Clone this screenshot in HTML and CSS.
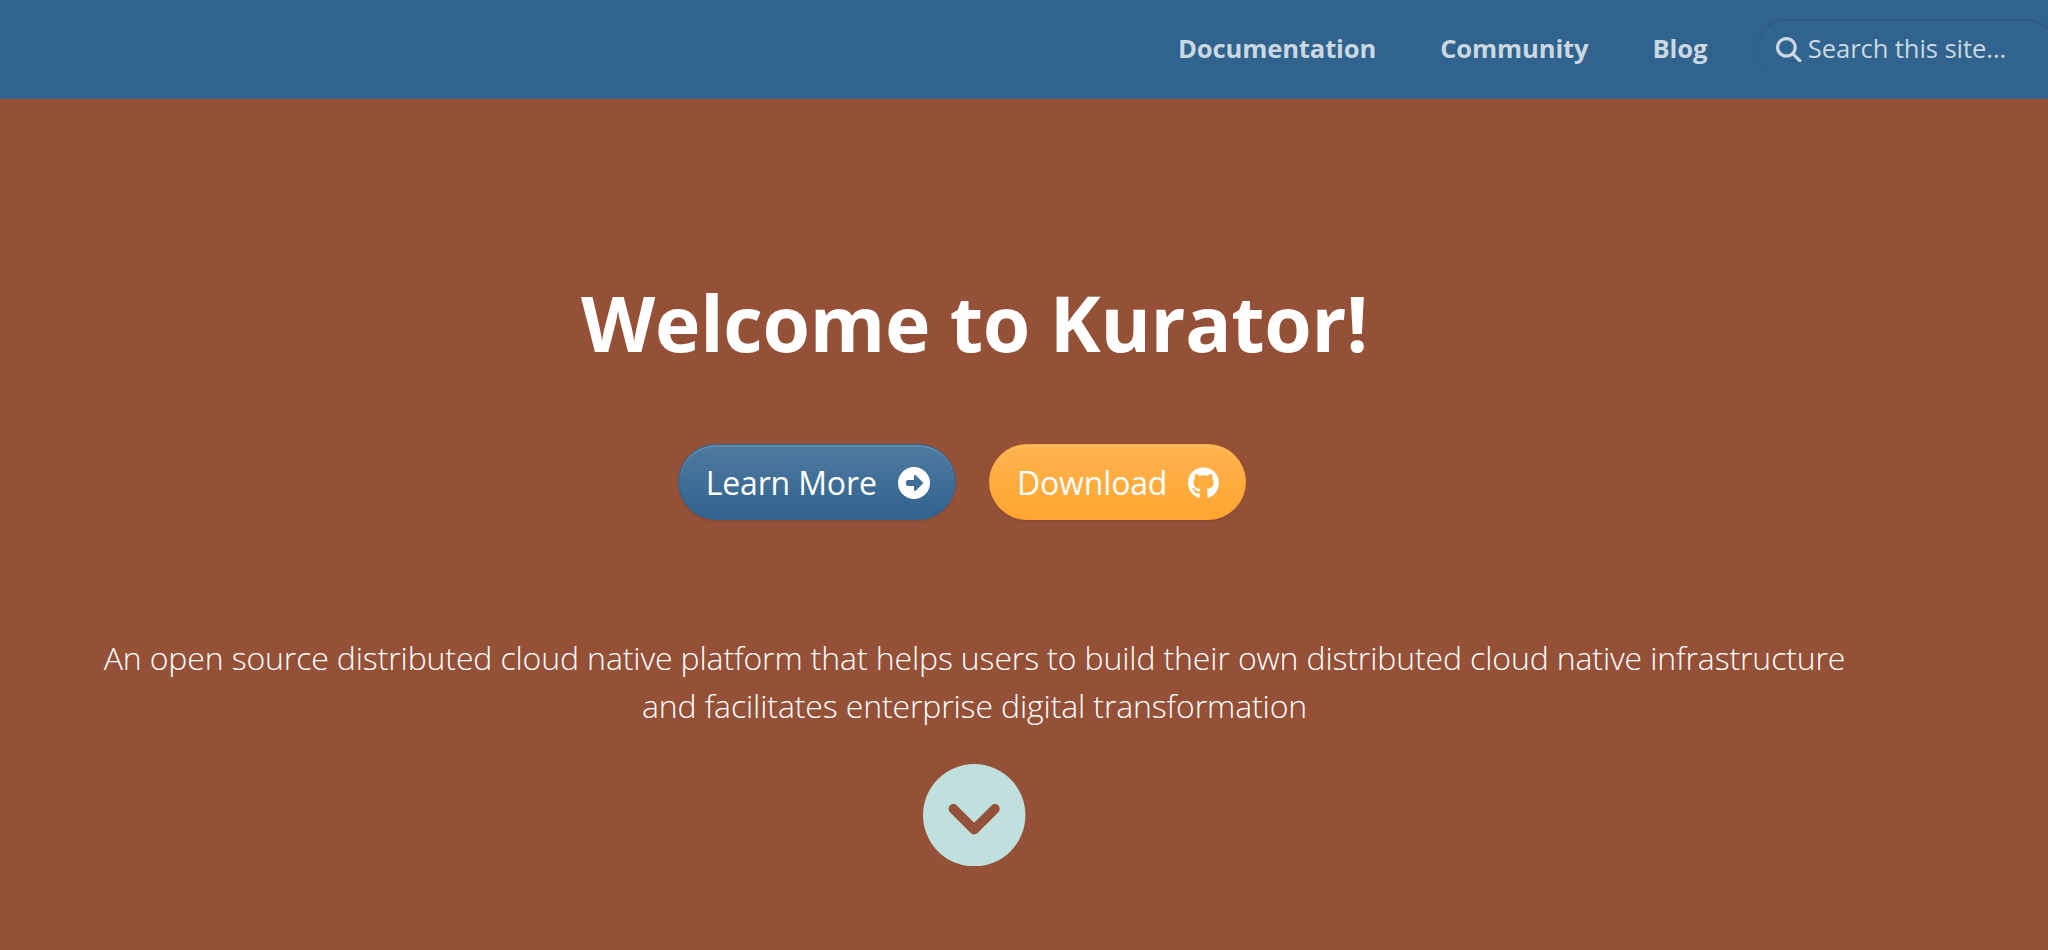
FILE: index.html
```html
<!DOCTYPE html>
<html lang="en">
<head>
<meta charset="utf-8">
<title>Kurator</title>
<link rel="stylesheet" href="styles.css">
</head>
<body>
<header class="navbar">
  <nav class="nav-links">
    <a class="nav-link">Documentation</a>
    <a class="nav-link">Community</a>
    <a class="nav-link">Blog</a>
  </nav>
  <div class="search">
    <svg class="search-icon" viewBox="0 0 512 512"><path d="M416 208c0 45.9-14.9 88.3-40 122.7L502.6 457.4c12.5 12.5 12.5 32.8 0 45.3s-32.8 12.5-45.3 0L330.7 376c-34.4 25.2-76.8 40-122.7 40C93.1 416 0 322.9 0 208S93.1 0 208 0S416 93.1 416 208zM208 352a144 144 0 1 0 0-288 144 144 0 1 0 0 288z"/></svg>
    <span>Search this site…</span>
  </div>
</header>
<main class="hero">
  <h1 class="hero-title">Welcome to Kurator!</h1>
  <div class="hero-actions">
    <a class="btn btn-primary"><span>Learn More</span><svg class="btn-icon" viewBox="0 0 512 512"><path d="M0 256a256 256 0 1 0 512 0A256 256 0 1 0 0 256zm395.3 11.3l-112 112c-4.6 4.6-11.5 5.9-17.4 3.5s-9.9-8.3-9.9-14.8l0-64-96 0c-17.7 0-32-14.3-32-32l0-32c0-17.7 14.3-32 32-32l96 0 0-64c0-6.5 3.9-12.3 9.9-14.8s12.9-1.1 17.4 3.5l112 112c6.2 6.2 6.2 16.4 0 22.6z"/></svg></a>
    <a class="btn btn-secondary"><span>Download</span><svg class="btn-icon btn-icon-github" viewBox="0 0 496 512"><path d="M165.9 397.4c0 2-2.3 3.6-5.2 3.6-3.3.3-5.6-1.3-5.6-3.6 0-2 2.3-3.6 5.2-3.6 3-.3 5.6 1.3 5.6 3.6zm-31.1-4.5c-.7 2 1.3 4.3 4.3 4.9 2.6 1 5.6 0 6.2-2s-1.3-4.3-4.3-5.2c-2.6-.7-5.5.3-6.2 2.3zm44.2-1.7c-2.9.7-4.9 2.6-4.6 4.9.3 2 2.9 3.3 5.9 2.6 2.9-.7 4.9-2.6 4.6-4.6-.3-1.9-3-3.2-5.9-2.9zM244.8 8C106.1 8 0 113.3 0 252c0 110.9 69.8 205.8 169.5 239.2 12.8 2.3 17.3-5.6 17.3-12.1 0-6.2-.3-40.4-.3-61.4 0 0-70 15-84.7-29.8 0 0-11.4-29.1-27.8-36.6 0 0-22.9-15.7 1.6-15.4 0 0 24.9 2 38.6 25.8 21.9 38.6 58.6 27.5 72.9 20.9 2.3-16 8.8-27.1 16-33.7-55.9-6.2-112.3-14.3-112.3-110.5 0-27.5 7.6-41.3 23.6-58.9-2.6-6.5-11.1-33.3 2.6-67.9 20.9-6.5 69 27 69 27 20-5.6 41.5-8.5 62.8-8.5s42.8 2.9 62.8 8.5c0 0 48.1-33.6 69-27 13.7 34.7 5.2 61.4 2.6 67.9 16 17.7 25.8 31.5 25.8 58.9 0 96.5-58.9 104.2-114.8 110.5 9.2 7.9 17 22.9 17 46.4 0 33.7-.3 75.4-.3 83.6 0 6.5 4.6 14.4 17.3 12.1C428.2 457.8 496 362.9 496 252 496 113.3 383.5 8 244.8 8z"/></svg></a>
  </div>
  <p class="hero-lead">An open source distributed cloud native platform that helps users to build their own distributed cloud native infrastructure and facilitates enterprise digital transformation</p>
  <a class="hero-down"><svg class="down-icon" viewBox="0 0 512 512"><path d="M256 0a256 256 0 1 0 0 512A256 256 0 1 0 256 0zM135 241c-9.4-9.4-9.4-24.6 0-33.9s24.6-9.4 33.9 0l87 87 87-87c9.4-9.4 24.6-9.4 33.9 0s9.4 24.6 0 33.9L273 345c-9.4 9.4-24.6 9.4-33.9 0L135 241z"/></svg></a>
</main>
</body>
</html>
```
FILE: styles.css
```css
* { box-sizing: border-box; }
body {
  margin: 0;
  height: 950px;
  overflow: hidden;
  background: #955138;
  color: #fff;
  font-family: "Open Sans", sans-serif;
  font-size: 25.6px;
  line-height: 1.5;
}
svg { display: block; fill: currentColor; flex: none; }
.navbar {
  display: flex;
  align-items: center;
  height: 99px;
  padding-left: 1178px;
  background: #30638e;
  color: rgba(255, 255, 255, .75);
  overflow: hidden;
}
.nav-links { display: flex; gap: 64px; flex: none; }
.nav-link { font-weight: 700; letter-spacing: -.14px; }
.search {
  display: flex;
  flex: none;
  align-items: center;
  gap: 6px;
  width: 298px;
  height: 61px;
  margin-left: 50px;
  padding-left: 19px;
  border-radius: 28px;
  box-shadow: inset 0 1.6px 1.6px rgba(0, 0, 0, .1);
  letter-spacing: -.1px;
  white-space: nowrap;
}
.search-icon { width: 25.6px; height: 25.6px; }
.hero {
  display: flex;
  flex-direction: column;
  align-items: center;
  width: 1949px;
  padding-top: 178px;
}
.hero-title {
  margin: 0;
  font-size: 76.8px;
  line-height: 92px;
  font-weight: 700;
  letter-spacing: -.28px;
}
.hero-actions { display: flex; gap: 33px; margin: 75px 25px 0 0; }
.btn {
  display: flex;
  align-items: center;
  gap: 21px;
  height: 76px;
  padding: 1px 25.6px 0 26.6px;
  border: 1.6px solid;
  border-radius: 38px;
  font-size: 32px;
  letter-spacing: -.15px;
}
.btn span, .btn svg { color: #fff; }
.btn-primary {
  border-color: #30638e;
  background: #30638e linear-gradient(180deg, #4f7a9f, #30638e);
  box-shadow: inset 0 1.6px 0 rgba(255, 255, 255, .15), 0 1.6px 1.6px rgba(0, 0, 0, .075);
}
.btn-secondary {
  border-color: #ffa630;
  background: #ffa630 linear-gradient(180deg, #ffb34f, #ffa630);
  box-shadow: inset 0 1.6px 0 rgba(255, 255, 255, .15), 0 1.6px 1.6px rgba(0, 0, 0, .075);
}
.btn-icon { width: 32px; height: 32px; }
.btn-icon-github { width: 31px; }
.hero-lead {
  width: 1790px;
  margin: 114px 0 0;
  font-size: 32px;
  font-weight: 300;
  line-height: 48px;
  letter-spacing: -.13px;
  text-align: center;
}
.hero-down { margin-top: 34px; color: #c0e0de; }
.down-icon { width: 102.4px; height: 102.4px; }
```
